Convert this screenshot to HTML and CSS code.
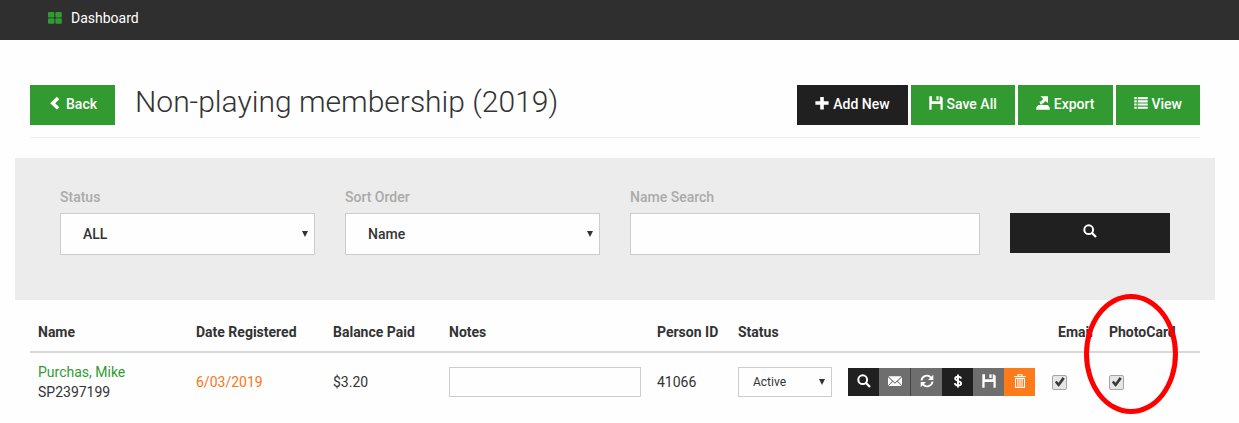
FILE: index.html
```
<!DOCTYPE html>
<html lang="en">

<head>
    <meta charset="UTF-8">
    <meta name="viewport" content="width=device-width, initial-scale=1.0">
    <title>Non-playing membership (2019)</title>
    <link rel="stylesheet" href="styles.css">
</head>

<body>
    <!-- Icon set -->
    <svg class="icon-set" aria-hidden="true">
        <symbol id="i-grid" viewBox="0 0 14 12">
            <rect x="0" y="0" width="6.4" height="5.5" rx="1" />
            <rect x="7.4" y="0" width="6.4" height="5.5" rx="1" />
            <rect x="0" y="6.3" width="6.4" height="5.5" rx="1" />
            <rect x="7.4" y="6.3" width="6.4" height="5.5" rx="1" />
        </symbol>
        <symbol id="i-left" viewBox="0 0 14 14">
            <path d="M8.8 .8 11.3 3.2 7.2 7.2 11.3 11.2 8.8 13.6 2.2 7.2Z" />
        </symbol>
        <symbol id="i-plus" viewBox="0 0 14 14">
            <path d="M5.2 1h3.6v4.2H13.6v3.6H8.8V13.4H5.2V8.8H.4V5.2h4.8Z" />
        </symbol>
        <symbol id="i-save" viewBox="0 0 14 14">
            <path d="M.3 .3H3v5h7.7v-5h1.2L13.7 2v11.7h-2.2V8H2.6v5.7H.3ZM7.4 .3h2.2v3.6H7.4Z" />
        </symbol>
        <symbol id="i-export" viewBox="0 0 14 14">
            <path d="M4.4 .3H12V7L9.6 4.900 7 7.400 4.900 5.300 7.300 2.900ZM3.400 5.800 4.700 5.600 6.600 7.500 6.300 8.600H4.500ZM2.200 9H11.800L13.700 11.500V13.800H.3V11.500Z" />
        </symbol>
        <symbol id="i-list" viewBox="0 0 15 14">
            <path d="M.3 .7h2.6v2.3H.3ZM4 .7h10.7v2.3H4ZM.3 4.1h2.6v2.3H.3ZM4 4.1h10.7v2.3H4ZM.3 7.5h2.6v2.3H.3ZM4 7.5h10.7v2.3H4ZM.3 10.9h2.6v2.3H.3ZM4 10.9h10.7v2.3H4Z" />
        </symbol>
        <symbol id="i-search" viewBox="0 0 14 14">
            <circle cx="5.7" cy="5.7" r="4.4" fill="none" stroke="currentColor" stroke-width="2" />
            <path d="M9.8 8.2 13.8 12.2 12.2 13.8 8.2 9.800Z" />
        </symbol>
        <symbol id="i-mail" viewBox="0 0 14 14">
            <path d="M.4 2.2h13.2L7 8.4ZM0 3.2 4.2 7.2 0 11.2ZM14 3.2v8L9.8 7.2ZM4.9 7.8 7 9.8l2.1-2L13.6 12H.4Z" />
        </symbol>
        <symbol id="i-refresh" viewBox="0 0 14 14">
            <path d="M1.5 6.5A5.4 5.4 0 0 1 11 3.6M12.5 7.5A5.4 5.4 0 0 1 3 10.4" fill="none" stroke="currentColor" stroke-width="1.8" />
            <path d="M13.3 .8v5.3H8ZM.7 13.2V7.9H6Z" />
        </symbol>
        <symbol id="i-dollar" viewBox="0 0 14 14">
            <path d="M10 4.6C9.8 3.2 8.7 2.6 7 2.6S4.2 3.3 4.2 4.6 5.4 6.4 7 6.9s3.1 1 3.1 2.5S8.8 11.5 7 11.5 4 10.7 3.8 9.2M7 .6v12.9" fill="none" stroke="currentColor" stroke-width="1.9" />
        </symbol>
        <symbol id="i-trash" viewBox="0 0 14 14">
            <path d="M1 2.5h12M5 2.300V.8h4v1.5M2.5 4.2v9.2h9V4.2M4.9 5v7.5M7 5v7.5M9.1 5v7.5M2.5 4.4h9" fill="none" stroke="currentColor" stroke-width="1.1" />
        </symbol>
    </svg>

    <nav class="topbar">
        <a href="#"><svg class="icon-grid"><use href="#i-grid" /></svg>Dashboard</a>
    </nav>

    <main class="container">
        <header class="page-header">
            <button type="button" class="btn btn-green"><svg class="icon"><use href="#i-left" /></svg>Back</button>
            <h1>Non-playing membership (2019)</h1>
            <div class="toolbar">
                <button type="button" class="btn btn-dark"><svg class="icon"><use href="#i-plus" /></svg>Add New</button>
                <button type="button" class="btn btn-green"><svg class="icon"><use href="#i-save" /></svg>Save All</button>
                <button type="button" class="btn btn-green"><svg class="icon"><use href="#i-export" /></svg>Export</button>
                <button type="button" class="btn btn-green"><svg class="icon"><use href="#i-list" /></svg>View</button>
            </div>
        </header>

        <form class="filters">
            <div class="field">
                <label for="status">Status</label>
                <div class="select">
                    <select id="status">
                        <option>ALL</option>
                    </select>
                </div>
            </div>
            <div class="field">
                <label for="sortOrder">Sort Order</label>
                <div class="select">
                    <select id="sortOrder">
                        <option>Name</option>
                    </select>
                </div>
            </div>
            <div class="field">
                <label for="nameSearch">Name Search</label>
                <input type="text" id="nameSearch">
            </div>
            <button type="button" class="btn btn-dark" aria-label="Search"><svg class="icon"><use href="#i-search" /></svg></button>
        </form>

        <table class="members">
            <colgroup>
                <col class="col-name">
                <col class="col-date">
                <col class="col-balance">
                <col class="col-notes">
                <col class="col-person">
                <col class="col-status">
                <col class="col-actions">
                <col class="col-email">
                <col class="col-card">
            </colgroup>
            <thead>
                <tr>
                    <th>Name</th>
                    <th>Date Registered</th>
                    <th>Balance Paid</th>
                    <th>Notes</th>
                    <th>Person ID</th>
                    <th>Status</th>
                    <th></th>
                    <th class="email">Email</th>
                    <th class="card">PhotoCard<span class="highlight"></span></th>
                </tr>
            </thead>
            <tbody>
                <tr>
                    <td><a href="#">Purchas, Mike</a><br>SP2397199</td>
                    <td class="date">6/03/2019</td>
                    <td>$3.20</td>
                    <td><input type="text" aria-label="Notes"></td>
                    <td>41066</td>
                    <td>
                        <div class="select">
                            <select aria-label="Member status">
                                <option>Active</option>
                            </select>
                        </div>
                    </td>
                    <td>
                        <div class="actions">
                            <button type="button" class="dark" aria-label="View"><svg class="icon"><use href="#i-search" /></svg></button>
                            <button type="button" aria-label="Email"><svg class="icon"><use href="#i-mail" /></svg></button>
                            <button type="button" class="divided" aria-label="Renew"><svg class="icon"><use href="#i-refresh" /></svg></button>
                            <button type="button" class="dark" aria-label="Payments"><svg class="icon"><use href="#i-dollar" /></svg></button>
                            <button type="button" aria-label="Save"><svg class="icon"><use href="#i-save" /></svg></button>
                            <button type="button" class="orange" aria-label="Delete"><svg class="icon"><use href="#i-trash" /></svg></button>
                        </div>
                    </td>
                    <td><input type="checkbox" aria-label="Email" checked></td>
                    <td><input type="checkbox" aria-label="PhotoCard" checked></td>
                </tr>
            </tbody>
        </table>
    </main>
</body>

</html>
```
FILE: styles.css
```
* {
    box-sizing: border-box;
}

body {
    margin: 0;
    background-color: #fefefe;
    color: #333;
    font-family: Roboto, "Liberation Sans", sans-serif;
    font-size: 14px;
    line-height: 20px;
}

a {
    color: #319a31;
    text-decoration: none;
}

button,
input,
select {
    font-family: inherit;
    font-size: 14px;
    border-radius: 0;
}

.icon-set {
    display: none;
}

.icon {
    width: 14px;
    height: 14px;
    fill: currentColor;
}

.topbar {
    display: flex;
    align-items: center;
    height: 40px;
    padding: 0 48px;
    background-color: #2f2f2f;
}

.topbar a {
    display: flex;
    align-items: center;
    gap: 9px;
    padding-bottom: 4px;
    color: #fff;
}

.icon-grid {
    width: 14px;
    height: 12px;
    fill: #319a31;
}

.container {
    margin: 45px 24px 0 15px;
    padding-bottom: 15px;
}

.page-header {
    display: flex;
    align-items: center;
    margin: 0 15px 20px;
    padding-bottom: 12px;
    border-bottom: 1px solid #ececec;
}

.page-header h1 {
    margin: 0 0 6px 20px;
    font-size: 30px;
    font-weight: 300;
    line-height: 34px;
}

.toolbar {
    display: flex;
    gap: 3px;
    margin-left: auto;
}

.btn {
    display: flex;
    align-items: center;
    justify-content: center;
    gap: 4px;
    height: 40px;
    padding: 0 18px 2px;
    border: none;
    color: #fff;
    font-weight: 500;
    cursor: pointer;
}

.btn .icon {
    margin-bottom: 2px;
}

.btn-green {
    background-color: #319a31;
}

.btn-dark {
    background-color: #202020;
}

.filters {
    display: grid;
    grid-template-columns: 255fr 255fr 350fr 160fr;
    align-items: start;
    gap: 30px;
    padding: 29px 45px 45px;
    background-color: #ececec;
}

.filters label {
    display: block;
    margin-bottom: 6px;
    color: #aaa;
    font-weight: 500;
}

.filters .btn {
    margin-top: 26px;
}

input[type="text"],
select {
    display: block;
    width: 100%;
    height: 42px;
    padding: 0 22px;
    border: 1px solid #ccc;
    background-color: #fefefe;
    color: #333;
    appearance: none;
}

.filters select {
    font-weight: 500;
}

.select {
    position: relative;
}

/* Drop-down arrow */
.select::after {
    content: "";
    position: absolute;
    top: 50%;
    right: 7px;
    margin-top: -3px;
    border: 3px solid transparent;
    border-top: 6px solid #333;
    border-bottom: none;
    pointer-events: none;
}

.members {
    width: calc(100% - 30px);
    margin: 14px 15px 0;
    border-collapse: collapse;
    table-layout: fixed;
}

.col-name {
    width: 158px;
}

.col-date {
    width: 137px;
}

.col-balance {
    width: 116px;
}

.col-person {
    width: 81px;
}

.col-status {
    width: 110px;
}

.col-actions {
    width: 204px;
}

.col-email {
    width: 57px;
}

.col-card {
    width: 99px;
}

.members th,
.members td {
    padding: 8px;
    text-align: left;
    vertical-align: middle;
    white-space: nowrap;
}

.members th {
    padding-bottom: 9px;
    border-bottom: 2px solid #d8d8d8;
    font-weight: 700;
}

.members td {
    padding-top: 9px;
}

.members th.email {
    text-align: right;
}

.members th.card {
    position: relative;
}

.members .date {
    color: #ff7417;
}

.members input[type="text"],
.members select {
    height: 30px;
}

.members select {
    padding: 0 14px;
    font-size: 12px;
}

.highlight {
    position: absolute;
    top: -20px;
    left: -17px;
    width: 94px;
    height: 120px;
    border: 5px solid #f00;
    border-radius: 50%;
    pointer-events: none;
}

.actions {
    display: flex;
    width: 187px;
}

.actions button {
    display: flex;
    flex: 1;
    align-items: center;
    justify-content: center;
    height: 28px;
    padding: 0 0 2px;
    border: none;
    background-color: #6e6e6e;
    color: #fff;
    cursor: pointer;
}

.actions .divided {
    border-left: 1px solid #444;
}

.actions .dark {
    background-color: #202020;
}

.actions .orange {
    background-color: #ff7a18;
}

input[type="checkbox"] {
    display: block;
    width: 15px;
    height: 15px;
    margin: 0;
    border: 1px solid #a5a5a5;
    border-radius: 2px;
    background-color: #e6e6e6;
    appearance: none;
}

input[type="checkbox"]:checked::after {
    content: "";
    display: block;
    width: 11px;
    height: 11px;
    margin: 1px;
    background-color: #3c3c3c;
    clip-path: polygon(8% 52%, 24% 38%, 42% 56%, 78% 5%, 98% 20%, 46% 92%, 38% 92%);
}
```
